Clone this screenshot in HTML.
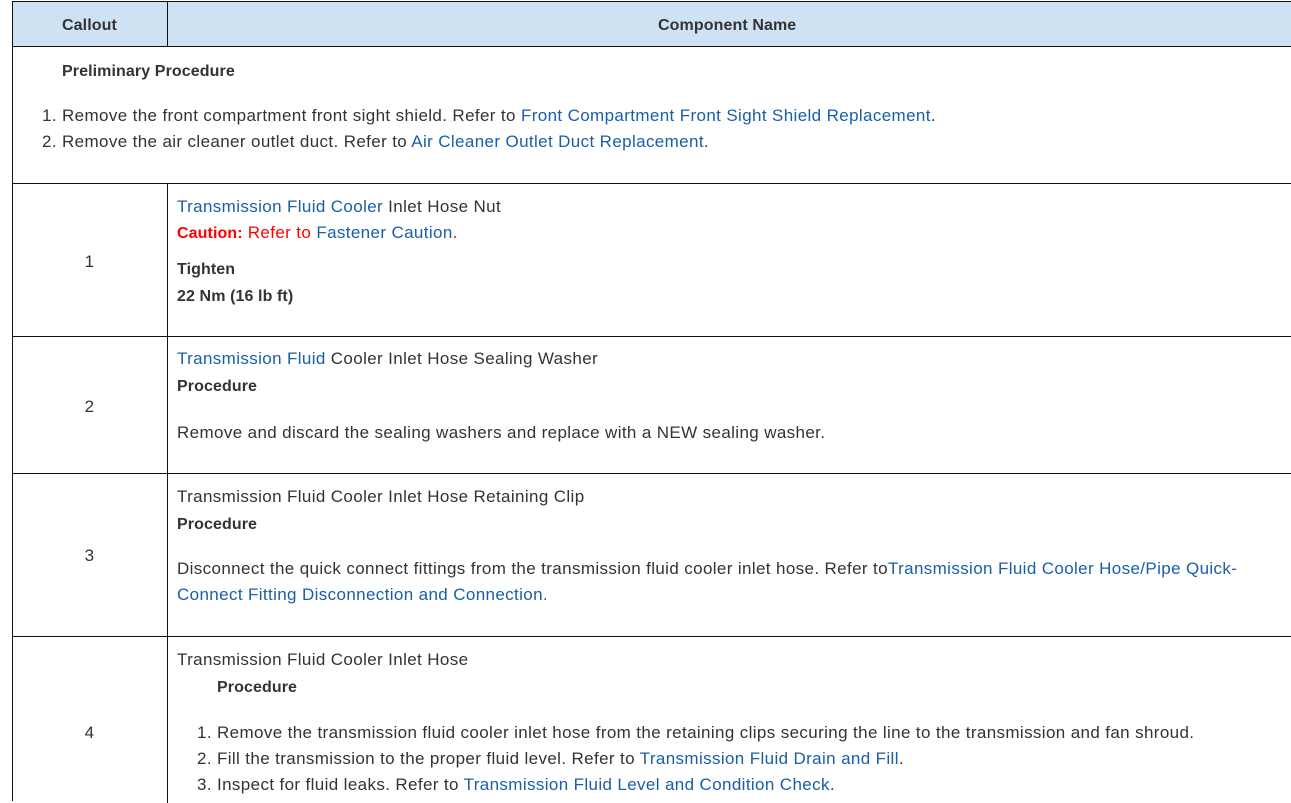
<!DOCTYPE html>
<html><head><meta charset="utf-8"><style>
body{margin:0;width:1291px;height:795px;overflow:hidden;background:#fff;font-family:"Liberation Sans",Arial,sans-serif;font-size:17px;letter-spacing:0.37px;color:#333;position:relative}
.a{position:absolute;white-space:nowrap}
.l{color:#1a5ea8}
.r{color:#f00}
b{font-weight:bold;font-size:16px;letter-spacing:0.1px}
.h{position:absolute;height:1px;background:#111;left:12px;width:1300px}
.v{position:absolute;width:1px;background:#111}
.n{position:absolute;left:12px;width:155px;text-align:center}
</style></head><body>
<div style="position:absolute;left:12px;top:1px;width:1300px;height:45px;background:#cfe2f3"></div>
<div class="h" style="top:1px"></div>
<div class="h" style="top:46px"></div>
<div class="h" style="top:183px"></div>
<div class="h" style="top:336px"></div>
<div class="h" style="top:473px"></div>
<div class="h" style="top:636px"></div>
<div class="v" style="left:12px;top:1px;height:800px"></div>
<div class="v" style="left:167px;top:1px;height:45px"></div>
<div class="v" style="left:167px;top:183px;height:620px"></div>
<div class="a" style="left:62px;top:15px"><b>Callout</b></div>
<div class="a" style="left:658px;top:15px"><b>Component Name</b></div>
<div class="a" style="left:62px;top:61px"><b>Preliminary Procedure</b></div>
<div class="a" style="left:42px;top:106px">1. Remove the front compartment front sight shield. Refer to <span class="l">Front Compartment Front Sight Shield Replacement</span>.</div>
<div class="a" style="left:42px;top:132px">2. Remove the air cleaner outlet duct. Refer to <span class="l">Air Cleaner Outlet Duct Replacement</span>.</div>

<div class="n" style="top:252px">1</div>
<div class="a" style="left:177px;top:197px"><span class="l">Transmission Fluid Cooler</span> Inlet Hose Nut</div>
<div class="a r" style="left:177px;top:223px"><b>Caution:</b> Refer to <span class="l">Fastener Caution</span>.</div>
<div class="a" style="left:177px;top:259px"><b>Tighten</b></div>
<div class="a" style="left:177px;top:286px"><b>22 Nm (16 lb ft)</b></div>

<div class="n" style="top:397px">2</div>
<div class="a" style="left:177px;top:349px"><span class="l">Transmission Fluid</span> Cooler Inlet Hose Sealing Washer</div>
<div class="a" style="left:177px;top:376px"><b>Procedure</b></div>
<div class="a" style="left:177px;top:423px">Remove and discard the sealing washers and replace with a NEW sealing washer.</div>

<div class="n" style="top:546px">3</div>
<div class="a" style="left:177px;top:487px">Transmission Fluid Cooler Inlet Hose Retaining Clip</div>
<div class="a" style="left:177px;top:514px"><b>Procedure</b></div>
<div class="a" style="left:177px;top:559px">Disconnect the quick connect fittings from the transmission fluid cooler inlet hose. Refer to<span class="l">Transmission Fluid Cooler Hose/Pipe Quick-</span></div>
<div class="a l" style="left:177px;top:585px">Connect Fitting Disconnection and Connection.</div>

<div class="n" style="top:723px">4</div>
<div class="a" style="left:177px;top:650px">Transmission Fluid Cooler Inlet Hose</div>
<div class="a" style="left:217px;top:677px"><b>Procedure</b></div>
<div class="a" style="left:197px;top:723px">1. Remove the transmission fluid cooler inlet hose from the retaining clips securing the line to the transmission and fan shroud.</div>
<div class="a" style="left:197px;top:749px">2. Fill the transmission to the proper fluid level. Refer to <span class="l">Transmission Fluid Drain and Fill</span>.</div>
<div class="a" style="left:197px;top:775px">3. Inspect for fluid leaks. Refer to <span class="l">Transmission Fluid Level and Condition Check</span>.</div>
</body></html>
